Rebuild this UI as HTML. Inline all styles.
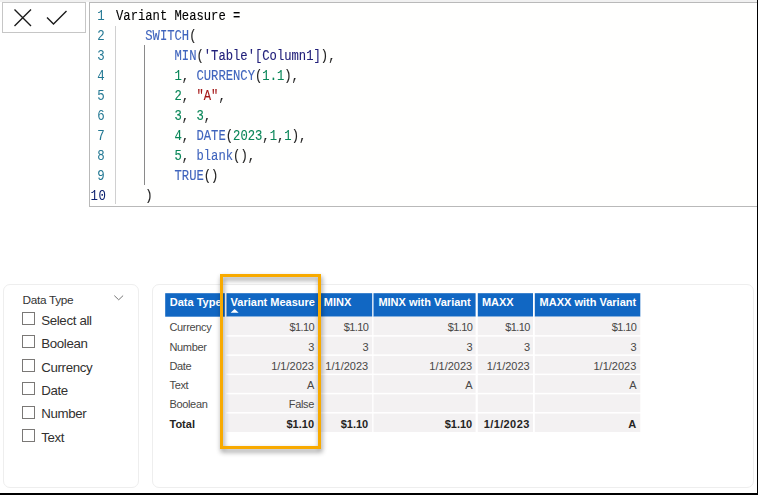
<!DOCTYPE html>
<html><head><meta charset="utf-8">
<style>
*{margin:0;padding:0;box-sizing:border-box}
html,body{width:758px;height:495px;overflow:hidden;background:#fff;position:relative;font-family:"Liberation Sans",sans-serif}
.a{position:absolute}
#topstrip{left:0;top:0;width:758px;height:2px;background:#f1f1f1}
#btnbox{left:2px;top:2px;width:84px;height:31px;border:1px solid #c6c6c6;background:#fff}
#editor{left:89px;top:2px;width:680px;height:205px;border:1px solid #b9b9b9;background:#fffffe}
.ln{position:absolute;left:89.5px;width:15.3px;transform:scaleY(1.14);transform-origin:0 13.4px;text-align:right;font-family:"Liberation Mono",monospace;font-size:12.4px;color:#237893;line-height:20px;height:20px}
.cl{position:absolute;left:116px;font-family:"Liberation Mono",monospace;font-size:12.2px;line-height:20px;height:20px;white-space:pre;color:#000;-webkit-text-stroke:0.1px currentColor;transform:scaleY(1.17);transform-origin:0 13.25px}
.f{color:#3f64bd}
.t{color:#22207a}
.n{color:#098658}
.s{color:#a31515}
.p{color:#222}
#rline{left:757px;top:0;width:1px;height:495px;background:#000}
#bline{left:0;top:493px;width:758px;height:2px;background:#000}
.card{border:1px solid #eeeeee;border-radius:7px;background:#fff}
.sl{position:absolute;left:41.2px;font-size:13.3px;color:#323130;letter-spacing:-0.35px;line-height:16px}
.cb{position:absolute;left:22px;width:13px;height:13px;border:1px solid #7a7876;background:#fff}
.th{position:absolute;top:293px;height:24px;background:#1167c3}
.tht{position:absolute;font-weight:bold;font-size:11px;color:#fff;line-height:13px;top:296px;white-space:nowrap}
.td{position:absolute;font-size:11px;color:#484746;line-height:13px;letter-spacing:-0.35px;white-space:nowrap}
.r{text-align:right}
.b{font-weight:bold;letter-spacing:0;color:#252423}
</style></head><body>
<div id="topstrip" class="a"></div>
<div id="btnbox" class="a"></div>
<svg class="a" style="left:0;top:0" width="90" height="40">
  <path d="M14.5 9.5 L31 26 M31 9.5 L14.5 26" stroke="#1a1a1a" stroke-width="1.35" fill="none"/>
  <path d="M47 17.5 L53.5 24 L66.5 11" stroke="#1a1a1a" stroke-width="1.35" fill="none"/>
</svg>
<div id="editor" class="a"></div>
<!-- indent guides -->
<div class="a" style="left:115px;top:26px;width:1px;height:178px;background:#d0d0d0"></div>
<div class="a" style="left:144px;top:45px;width:1px;height:140px;background:#8a8a8a"></div>
<!-- line numbers -->
<div class="ln" style="top:6.8px">1</div>
<div class="ln" style="top:26.8px">2</div>
<div class="ln" style="top:46.8px">3</div>
<div class="ln" style="top:66.8px">4</div>
<div class="ln" style="top:86.8px">5</div>
<div class="ln" style="top:106.8px">6</div>
<div class="ln" style="top:126.8px">7</div>
<div class="ln" style="top:146.8px">8</div>
<div class="ln" style="top:166.8px">9</div>
<div class="ln" style="top:186.8px;color:#0b216f;left:90.5px;letter-spacing:0.6px">10</div>
<!-- code -->
<div class="cl" style="top:6.9px">Variant Measure =</div>
<div class="cl" style="top:26.9px">    <span class="f">SWITCH</span><span class="p">(</span></div>
<div class="cl" style="top:46.9px">        <span class="f">MIN</span><span class="p">(</span><span class="t">'Table'[Column1]</span><span class="p">),</span></div>
<div class="cl" style="top:66.9px">        <span class="n">1</span><span class="p">, </span><span class="f">CURRENCY</span><span class="p">(</span><span class="n">1.1</span><span class="p">),</span></div>
<div class="cl" style="top:86.9px">        <span class="n">2</span><span class="p">, </span><span class="s">"A"</span><span class="p">,</span></div>
<div class="cl" style="top:106.9px">        <span class="n">3</span><span class="p">, </span><span class="n">3</span><span class="p">,</span></div>
<div class="cl" style="top:126.9px">        <span class="n">4</span><span class="p">, </span><span class="f">DATE</span><span class="p">(</span><span class="n">2023</span><span class="p">,</span><span class="n">1</span><span class="p">,</span><span class="n">1</span><span class="p">),</span></div>
<div class="cl" style="top:146.9px">        <span class="n">5</span><span class="p">, </span><span class="f">blank</span><span class="p">(),</span></div>
<div class="cl" style="top:166.9px">        <span class="f">TRUE</span><span class="p">()</span></div>
<div class="cl" style="top:186.9px">    <span class="p">)</span></div>

<!-- slicer card -->
<div class="a card" style="left:3px;top:284px;width:136px;height:204px"></div>
<div class="a" style="left:22.5px;top:292.7px;font-size:11.8px;color:#333;letter-spacing:-0.3px;line-height:14px">Data Type</div>
<svg class="a" style="left:110px;top:290px" width="20" height="15"><path d="M114.3 295.6 L118.7 299.8 L123.1 295.6" transform="translate(-110,-290)" stroke="#666" stroke-width="0.9" fill="none"/></svg>
<div class="cb" style="top:312.0px"></div><div class="sl" style="top:312.8px">Select all</div>
<div class="cb" style="top:335.4px"></div><div class="sl" style="top:336.2px">Boolean</div>
<div class="cb" style="top:358.8px"></div><div class="sl" style="top:359.6px">Currency</div>
<div class="cb" style="top:382.2px"></div><div class="sl" style="top:383.0px">Date</div>
<div class="cb" style="top:405.6px"></div><div class="sl" style="top:406.4px">Number</div>
<div class="cb" style="top:429.0px"></div><div class="sl" style="top:429.8px">Text</div>

<!-- table card -->
<div class="a card" style="left:152px;top:284px;width:602px;height:204px"></div>
<!-- table bg -->
<svg class="a" style="left:0;top:0" width="758" height="495">
  <g fill="#1167c3">
    <rect x="165.2" y="293.2" width="59.6" height="23.5"/>
    <rect x="226.5" y="293.2" width="92.7" height="23.5"/>
    <rect x="320.5" y="293.2" width="51.7" height="23.5"/>
    <rect x="373.5" y="293.2" width="102.1" height="23.5"/>
    <rect x="477.8" y="293.2" width="55.2" height="23.5"/>
    <rect x="534.8" y="293.2" width="105.5" height="23.5"/>
  </g>
  <g fill="#f3f1f2">
    <rect x="226.5" y="316.7" width="92.7" height="115.3"/>
    <rect x="320.5" y="316.7" width="51.7" height="115.3"/>
    <rect x="373.5" y="316.7" width="102.1" height="115.3"/>
    <rect x="477.8" y="316.7" width="55.2" height="115.3"/>
    <rect x="534.8" y="316.7" width="105.5" height="115.3"/>
  </g>
  <g fill="#fff">
    <rect x="226" y="335.15" width="415" height="1.5"/>
    <rect x="226" y="354.38" width="415" height="1.5"/>
    <rect x="226" y="373.61" width="415" height="1.5"/>
    <rect x="226" y="392.84" width="415" height="1.5"/>
    <rect x="226" y="412.07" width="415" height="1.5"/>
  </g>
</svg>
<div class="tht" style="left:169.8px;width:55px;overflow:hidden">Data Type</div>
<div class="tht" style="left:230.6px">Variant Measure</div>
<svg class="a" style="left:229px;top:308px" width="12" height="6"><path d="M1.6 4.8 L5.6 1 L9.6 4.8 Z" fill="#fff"/></svg>
<div class="tht" style="left:323.8px">MINX</div>
<div class="tht" style="left:378.4px">MINX with Variant</div>
<div class="tht" style="left:481.9px">MAXX</div>
<div class="tht" style="left:539.6px">MAXX with Variant</div>

<!-- rows -->
<div class="td" style="left:169.5px;top:321.30px">Currency</div>
<div class="td r" style="left:214.0px;width:100px;top:321.30px;letter-spacing:-0.6px">$1.10</div>
<div class="td r" style="left:268.2px;width:100px;top:321.30px;letter-spacing:-0.6px">$1.10</div>
<div class="td r" style="left:372.2px;width:100px;top:321.30px;letter-spacing:-0.6px">$1.10</div>
<div class="td r" style="left:429.7px;width:100px;top:321.30px;letter-spacing:-0.6px">$1.10</div>
<div class="td r" style="left:536.3px;width:100px;top:321.30px;letter-spacing:-0.6px">$1.10</div>
<div class="td" style="left:169.5px;top:340.55px">Number</div>
<div class="td r" style="left:214.0px;width:100px;top:340.55px">3</div>
<div class="td r" style="left:268.2px;width:100px;top:340.55px">3</div>
<div class="td r" style="left:372.2px;width:100px;top:340.55px">3</div>
<div class="td r" style="left:429.7px;width:100px;top:340.55px">3</div>
<div class="td r" style="left:536.3px;width:100px;top:340.55px">3</div>
<div class="td" style="left:169.5px;top:359.80px">Date</div>
<div class="td r" style="left:214.0px;width:100px;top:359.80px;letter-spacing:0">1/1/2023</div>
<div class="td r" style="left:268.2px;width:100px;top:359.80px;letter-spacing:0">1/1/2023</div>
<div class="td r" style="left:372.2px;width:100px;top:359.80px;letter-spacing:0">1/1/2023</div>
<div class="td r" style="left:429.7px;width:100px;top:359.80px;letter-spacing:0">1/1/2023</div>
<div class="td r" style="left:536.3px;width:100px;top:359.80px;letter-spacing:0">1/1/2023</div>
<div class="td" style="left:169.5px;top:379.05px">Text</div>
<div class="td r" style="left:214.0px;width:100px;top:379.05px">A</div>
<div class="td r" style="left:372.2px;width:100px;top:379.05px">A</div>
<div class="td r" style="left:536.3px;width:100px;top:379.05px">A</div>
<div class="td" style="left:169.5px;top:398.30px">Boolean</div>
<div class="td r" style="left:214.0px;width:100px;top:398.30px">False</div>
<div class="td b" style="left:169.5px;top:417.55px">Total</div>
<div class="td b r" style="left:214.0px;width:100px;top:417.55px">$1.10</div>
<div class="td b r" style="left:268.2px;width:100px;top:417.55px">$1.10</div>
<div class="td b r" style="left:372.2px;width:100px;top:417.55px">$1.10</div>
<div class="td b r" style="left:429.7px;width:100px;top:417.55px;letter-spacing:0.4px">1/1/2023</div>
<div class="td b r" style="left:536.3px;width:100px;top:417.55px">A</div>
<!-- orange box -->
<div class="a" style="left:220px;top:273.5px;width:101px;height:175px;border:3px solid #f8aa00;filter:drop-shadow(1px 3px 2.5px rgba(0,0,0,0.45))"></div>
<div id="rline" class="a"></div>
<div id="bline" class="a"></div>
</body></html>
